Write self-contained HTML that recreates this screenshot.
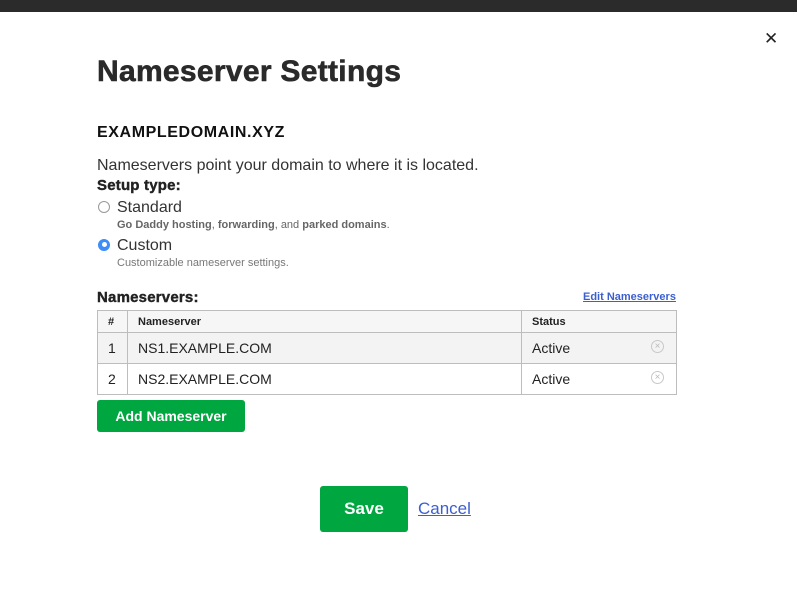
<!DOCTYPE html><html><head><style>
body{margin:0;width:797px;height:590px;background:#fff;font-family:"Liberation Sans",sans-serif;position:relative;overflow:hidden;color:#222}
.a{position:absolute;white-space:nowrap}
.top{left:0;top:0;width:797px;height:12px;background:#2b2b2b}
h1{position:absolute;left:97px;top:55px;margin:0;font-size:30px;font-weight:900;letter-spacing:0.3px;color:#2a2a2a;-webkit-text-stroke:0.6px #2a2a2a}
.rad{position:absolute;width:12px;height:12px;border-radius:50%;box-sizing:border-box}
table{position:absolute;left:97px;top:310px;width:580px;border-collapse:collapse;font-size:14px}
td,th{border:1px solid #bdbdbd;padding:0 0 0 10px;text-align:left}
th{height:21px;font-size:11px;font-weight:bold;background:#f6f6f6}
td{height:30px}
.x{float:right;margin-right:12px;width:11px;height:11px;border:1px solid #c8c8c8;border-radius:50%;color:#bbb;font-size:10px;line-height:11px;text-align:center}
.btn{position:absolute;background:#00a63f;color:#fff;font-weight:bold;border-radius:3px;text-align:center}
.hv{-webkit-text-stroke:0.4px #222}
</style></head><body>
<div class="a top"></div>
<div class="a" style="left:764px;top:29px;font-size:17px;color:#222">✕</div>
<h1>Nameserver Settings</h1>
<div class="a" style="left:97px;top:124px;font-size:16px;font-weight:bold;color:#111;letter-spacing:0.6px">EXAMPLEDOMAIN.XYZ</div>
<div class="a" style="left:97px;top:157px;font-size:16px;color:#333">Nameservers point your domain to where it is located.</div>
<div class="a hv" style="left:97px;top:177px;font-size:15px;font-weight:900;color:#222;letter-spacing:0.2px">Setup type:</div>
<div class="rad" style="left:98px;top:201px;border:1px solid #999"></div>
<div class="a" style="left:117px;top:199px;font-size:16px;color:#333">Standard</div>
<div class="a" style="left:117px;top:219px;font-size:11px;color:#666"><b>Go Daddy hosting</b>, <b>forwarding</b>, and <b>parked domains</b>.</div>
<div class="rad" style="left:98px;top:239px;background:#3d8ef7;border:3.5px solid #3d8ef7"><div style="width:5px;height:5px;background:#fff;border-radius:50%;margin:0 auto"></div></div>
<div class="a" style="left:117px;top:237px;font-size:16px;color:#333">Custom</div>
<div class="a" style="left:117px;top:257px;font-size:11px;color:#777">Customizable nameserver settings.</div>
<div class="a hv" style="left:97px;top:289px;font-size:15px;font-weight:900;color:#222;letter-spacing:0.2px">Nameservers:</div>
<div class="a" style="left:583px;top:291px;font-size:11px;font-weight:bold;color:#3c5fd0;text-decoration:underline">Edit Nameservers</div>
<table>
<tr><th style="width:19px">#</th><th style="width:383px">Nameserver</th><th>Status</th></tr>
<tr style="background:#f3f3f3"><td>1</td><td>NS1.EXAMPLE.COM</td><td>Active<span class="x">×</span></td></tr>
<tr><td>2</td><td>NS2.EXAMPLE.COM</td><td>Active<span class="x">×</span></td></tr>
</table>
<div class="btn" style="left:97px;top:400px;width:148px;height:32px;line-height:32px;font-size:14px">Add Nameserver</div>
<div class="btn" style="left:320px;top:486px;width:88px;height:46px;line-height:46px;font-size:17px">Save</div>
<div class="a" style="left:418px;top:499px;font-size:17px;color:#3c5fd0;text-decoration:underline">Cancel</div>
</body></html>
